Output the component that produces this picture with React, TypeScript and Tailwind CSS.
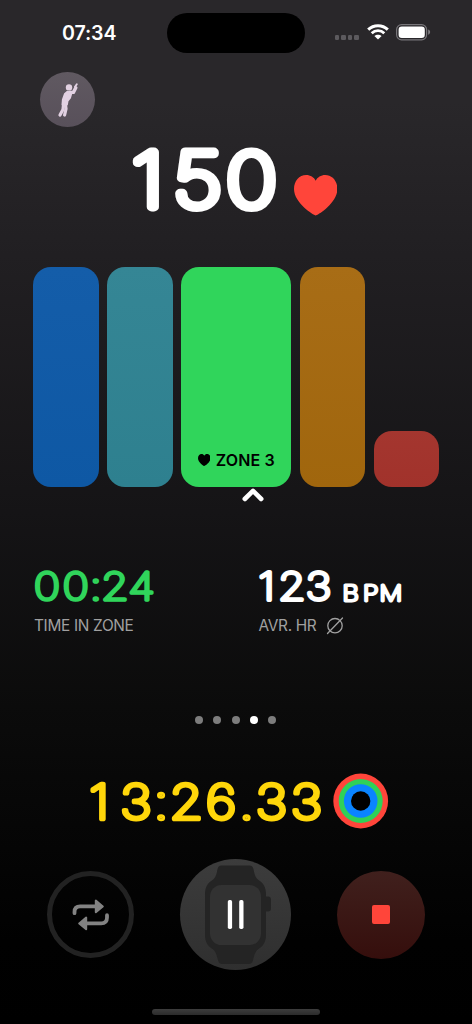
import React from "react";

type RoundedTextProps = {
  text: string;
  centers: number[];
  width: number;
  height: number;
  baseline: number;
  size: number;
  stroke: number;
  color: string;
  stretch?: number;
};

/** Numerals with rounded terminals: a thin face with a round-joined outline. */
function RoundedText({ text, centers, width, height, baseline, size, stroke, color, stretch = 1.14 }: RoundedTextProps) {
  return (
    <svg width={width} height={height} viewBox={`0 0 ${width} ${height}`} className="block shrink-0 overflow-visible">
      <text
        transform={`scale(${stretch} 1)`}
        x={centers.map((c) => c / stretch).join(" ")}
        y={baseline}
        textAnchor="middle"
        fontFamily="Inter, sans-serif"
        fontWeight={100}
        fontSize={size}
        fill={color}
        stroke={color}
        strokeWidth={stroke}
        strokeLinejoin="round"
        strokeLinecap="round"
      >
        {text}
      </text>
    </svg>
  );
}

function Heart({ className }: { className: string }) {
  return (
    <svg viewBox="0 0 43.4 40.4" preserveAspectRatio="none" className={className} fill="currentColor">
      <path d="M21.7 40.4C19.8 40.4 0 28 0 14C0 6 5.2 0 12.2 0C16.4 0 20 2.3 21.7 5.7C23.4 2.3 27 0 31.2 0C38.2 0 43.4 6 43.4 14C43.4 28 23.6 40.4 21.7 40.4Z" />
    </svg>
  );
}

function StatusBar() {
  return (
    <header className="flex h-[53px] shrink-0 items-start pt-[12.5px]">
      <div className="w-[167px] pt-[5px] pl-[62px] text-[19.6px] leading-[30px] font-semibold tracking-[-0.1px]">07:34</div>
      <div className="h-[40.5px] w-[138px] rounded-full bg-black" />
      <div className="flex items-center pt-[11px] pl-[30px]">
        <div className="mt-[11px] flex gap-[2.3px]">
          {[0, 1, 2, 3].map((i) => (
            <i key={i} className="size-[4.2px] rounded-[1.2px] bg-[#5c5a5e]" />
          ))}
        </div>
        <svg width="22" height="16" viewBox="0 0 22 16" className="ml-[8px]" fill="none" stroke="white">
          <path d="M1.2 5.6C6.6.3 15.4.3 20.8 5.6" strokeWidth="3" />
          <path d="M4.7 9.2C8.2 5.8 13.8 5.8 17.3 9.2" strokeWidth="2.8" />
          <path d="M11 15.6L7.4 12.1C9.4 10.2 12.6 10.2 14.6 12.1Z" fill="white" stroke="none" />
        </svg>
        <svg width="35" height="17" viewBox="0 0 35 17" className="ml-[7.3px]">
          <rect x=".6" y=".6" width="30" height="15.2" rx="5" fill="none" stroke="#777579" strokeWidth="1.2" />
          <rect x="2.6" y="2.5" width="26.2" height="11.4" rx="3.2" fill="white" />
          <path d="M32.2 5.6C34.8 6.5 34.8 9.8 32.2 10.8Z" fill="#817f83" />
        </svg>
      </div>
    </header>
  );
}

function WorkoutBadge() {
  return (
    <div className="ml-[40.3px] size-[55px] rounded-full bg-linear-to-b from-[#605961] to-[#58505a]">
      <svg viewBox="0 0 55 55" className="size-full" fill="none" stroke="#e2d1e2" strokeLinecap="round" strokeLinejoin="round">
        <circle cx="29" cy="15.4" r="3.2" fill="#e2d1e2" stroke="none" />
        <path d="M27.400 19.800L31.600 20.800L30.200 25.600L27.600 29L27 32.600L22.400 32.600L22.800 27.500L24.800 22Z" fill="#e2d1e2" strokeWidth="1.8" />
        <path d="M29.4 20.4L33.4 20.4L35.8 15.8" strokeWidth="3.4" />
        <path d="M35 14.8L36.8 12.2" strokeWidth="1.9" />
        <path d="M23.6 32L23 37.4L20 43" strokeWidth="3.2" />
        <path d="M25.4 32L26 36.8L24.6 43" strokeWidth="3.2" />
      </svg>
    </div>
  );
}

function Zones() {
  return (
    <section className="mt-[51px] flex h-[220px] items-end gap-[8.7px] pl-[33.3px]">
      <div className="h-full w-[65.3px] rounded-[18px] bg-linear-to-b from-[#145da9] to-[#0e58a4]" />
      <div className="h-full w-[65.3px] rounded-[18px] bg-linear-to-b from-[#358695] to-[#2e808f]" />
      <div className="flex h-full w-[110px] items-end justify-center rounded-[18px] bg-[#30d55b] pb-[17px] text-black">
        <div className="flex items-center gap-[5.5px]">
          <Heart className="h-[12px] w-[12.6px]" />
          <span className="text-[16px] leading-[20px] font-semibold tracking-[0.15px] whitespace-nowrap">ZONE 3</span>
        </div>
      </div>
      <div className="h-full w-[65.3px] rounded-[18px] bg-linear-to-b from-[#a86d16] to-[#a0660d]" />
      <div className="h-[55.7px] w-[65.3px] rounded-[18px] bg-linear-to-b from-[#a4362f] to-[#a1322b]" />
    </section>
  );
}

function Controls() {
  return (
    <section className="flex h-[111px] items-center pl-[47px]">
      <button className="flex size-[87px] items-center justify-center rounded-full border-[5.4px] border-[#222222]">
        <svg width="38" height="34" viewBox="0 0 38 34" fill="none" stroke="#838383" strokeLinecap="round" strokeLinejoin="round">
          <path d="M2.5 15.2V13.9Q2.5 8.3 8.1 8.3H23" strokeWidth="3.8" />
          <path d="M23.8 2.6V14.2L30.8 8.4Z" fill="#838383" strokeWidth="2" />
          <path d="M35 17.2V19.6Q35 25.4 29.2 25.4H15" strokeWidth="3.8" />
          <path d="M14.2 19.6V31.2L7.2 25.4Z" fill="#838383" strokeWidth="2" />
        </svg>
      </button>
      <button className="ml-[46px] size-[111px] rounded-full bg-linear-to-b from-[#3c3c3c] to-[#2f2f2f]">
        <svg viewBox="0 0 111 111" className="size-full">
          <path
            d="M41.500 6.600H69.500Q72.800 6.600 73.600 10.500C74.600 16 75.600 19 78.500 21C83.500 24 86 28.500 86 35V37.500H88Q91 37.500 91 40.500V49.500Q91 52.500 88 52.500H86V76C86 82.500 83.500 87 78.500 90C75.600 92 74.600 95 73.200 100.500Q72.200 105 68.500 105H42.500Q38.800 105 37.800 100.500C36.400 95 35.400 92 32.500 90C27.500 87 25 82.500 25 76V35C25 28.500 27.500 24 32.500 21C35.400 19 36.400 16 37.400 10.500Q38.200 6.600 41.500 6.600Z"
            fill="#242424"
          />
          <rect x="30" y="26" width="51" height="60" rx="11.500" fill="#323232" />
          <rect x="47.800" y="41" width="4.300" height="29" rx="1.700" fill="white" />
          <rect x="59.200" y="41" width="4.300" height="29" rx="1.700" fill="white" />
        </svg>
      </button>
      <button className="ml-[46px] flex size-[88px] items-center justify-center rounded-full bg-linear-to-b from-[#40201d] to-[#350e0c]">
        <i className="size-[18.4px] rounded-[2px] bg-[#ff453a]" />
      </button>
    </section>
  );
}

export default function App() {
  return (
    <main className="flex h-[1024px] w-[472px] flex-col overflow-hidden bg-[linear-gradient(180deg,#29272a_0%,#29272a_10%,#211f22_25%,#151416_50%,#0b0b0b_69%,#010101_92%,#000_100%)] font-['Inter',sans-serif] text-white">
      <StatusBar />
      <div className="h-[19px] shrink-0" />
      <WorkoutBadge />

      <section className="mt-[13px] flex h-[76px] shrink-0 items-start pl-[120px]">
        <RoundedText text="150" centers={[27.8, 77.5, 131.5]} width={174} height={76} baseline={66.800} size={75} stroke={8.800} color="#fff" stretch={1.16} />
        <Heart className="mt-[35.3px] h-[40.4px] w-[43.4px] text-[#ff453a]" />
      </section>

      <Zones />
      <svg width="24" height="16" viewBox="0 0 24 16" className="ml-[241px] block shrink-0" fill="none" stroke="white" strokeWidth="4.6" strokeLinecap="round" strokeLinejoin="round">
        <path d="M3.800 12L12 3.900L20.200 12" />
      </svg>

      <section className="mt-[57px] flex h-[80px] shrink-0 pl-[34px]">
        <div className="w-[224.500px]">
          <RoundedText text="00:24" centers={[13, 41.800, 61.800, 81, 107.500]} width={140} height={50} baseline={40.200} size={38.500} stroke={3.600} color="#30d55b" stretch={1.16} />
          <div className="mt-[5.500px] text-[15.400px] leading-[20px] tracking-[-0.32px] text-[#a0a0a0]">TIME IN ZONE</div>
        </div>
        <div>
          <div className="flex">
            <RoundedText text="123" centers={[7.500, 32.800, 59.600]} width={83} height={50} baseline={40.200} size={38.500} stroke={4} color="#fff" />
            <RoundedText text="BPM" centers={[8.700, 28.600, 48.800]} width={60} height={50} baseline={40.700} size={20.800} stroke={2.900} color="#fff" stretch={1.22} />
          </div>
          <div className="mt-[5.500px] flex items-center gap-[10px] text-[15.400px] leading-[20px] tracking-[-0.32px] text-[#a0a0a0]">
            <span>AVR. HR</span>
            <svg width="18" height="18" viewBox="0 0 18 18" fill="none" stroke="#a0a0a0" strokeWidth="1.300" strokeLinecap="round">
              <circle cx="9" cy="8.700" r="7.200" />
              <path d="M1.500 16.500L16.500 1" />
            </svg>
          </div>
        </div>
      </section>

      <nav className="mt-[76px] flex h-[8px] shrink-0 gap-[10.200px] pl-[195.300px]">
        {[0, 1, 2, 3, 4].map((i) => (
          <i key={i} className={i === 3 ? "size-[8px] rounded-full bg-white" : "size-[8px] rounded-full bg-[#7d7d7d]"} />
        ))}
      </nav>

      <section className="mt-[48.500px] flex h-[56px] shrink-0 items-center pl-[80px]">
        <RoundedText
          text="13:26.33"
          centers={[19.300, 56, 81.200, 106.400, 141, 166.500, 191.400, 226.500]}
          width={253}
          height={56}
          baseline={45.500}
          size={47.500}
          stroke={4.700}
          color="#ffd60a"
        />
        <svg width="56" height="56" viewBox="0 0 56 56" className="shrink-0">
          <circle cx="27.700" cy="28" r="27.400" fill="#ff453a" />
          <circle cx="27.700" cy="28" r="22" fill="#30d158" />
          <circle cx="27.700" cy="28" r="16.800" fill="#0a84ff" />
          <circle cx="27.700" cy="28" r="9.700" fill="#000" />
        </svg>
      </section>

      <div className="h-[30.700px] shrink-0" />
      <Controls />
      <div className="mt-[39px] ml-[151.700px] h-[6px] w-[168.600px] shrink-0 rounded-full bg-linear-to-b from-[#3d3d3d] to-[#2c2c2c]" />
    </main>
  );
}
